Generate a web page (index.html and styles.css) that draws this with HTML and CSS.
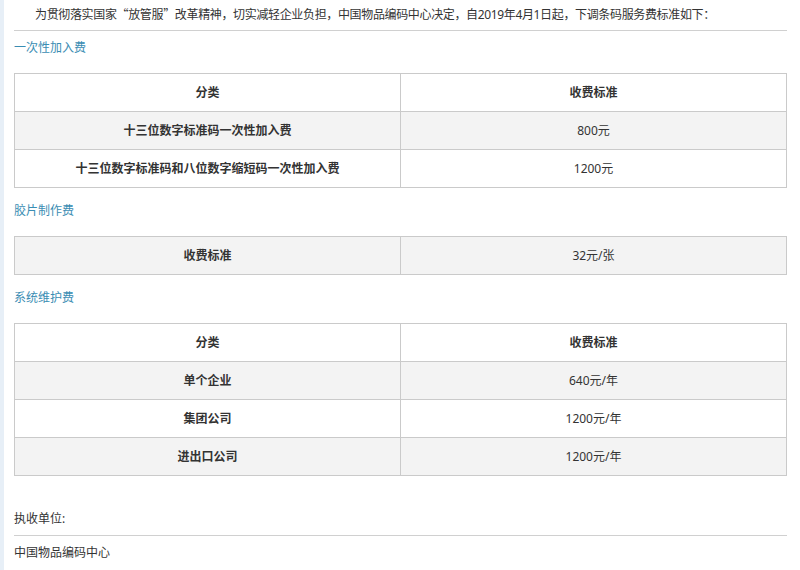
FILE: index.html
```html
<!DOCTYPE html>
<html lang="zh-CN">
<head>
<meta charset="utf-8">
<title>条码服务费标准</title>
<link rel="stylesheet" href="styles.css">
</head>
<body>
<div class="page">
  <p class="intro">为贯彻落实国家<span class="cjk">“</span>放管服<span class="cjk">”</span>改革精神，切实减轻企业负担，中国物品编码中心决定，自2019年4月1日起，下调条码服务费标准如下：</p>

  <h3 class="sec sec-first">一次性加入费</h3>
  <table class="fee">
    <tr class="row-white"><th>分类</th><th>收费标准</th></tr>
    <tr class="row-gray"><th>十三位数字标准码一次性加入费</th><td>800元</td></tr>
    <tr class="row-white"><th>十三位数字标准码和八位数字缩短码一次性加入费</th><td>1200元</td></tr>
  </table>

  <h3 class="sec">胶片制作费</h3>
  <table class="fee">
    <tr class="row-gray"><th>收费标准</th><td>32元/张</td></tr>
  </table>

  <h3 class="sec">系统维护费</h3>
  <table class="fee">
    <tr class="row-white"><th>分类</th><th>收费标准</th></tr>
    <tr class="row-gray"><th>单个企业</th><td>640元/年</td></tr>
    <tr class="row-white"><th>集团公司</th><td>1200元/年</td></tr>
    <tr class="row-gray"><th>进出口公司</th><td>1200元/年</td></tr>
  </table>

  <p class="unit-label">执收单位:</p>
  <p class="unit-name">中国物品编码中心</p>
</div>
</body>
</html>
```
FILE: styles.css
```css
html, body {
  margin: 0;
  padding: 0;
}
body {
  background: #e7eff7;
  font-family: "Noto Sans", "Noto Sans CJK SC", sans-serif;
  font-size: 12px;
  color: #333;
}
.page {
  margin-left: 4px;
  background: #fff;
  min-height: 570px;
  padding: 0 13px 0 10px;
  box-sizing: border-box;
}
.cjk {
  font-family: "Noto Sans CJK SC", sans-serif;
}
.intro {
  margin: 0;
  padding: 4px 0 5px 21px;
  line-height: 20px;
  letter-spacing: -0.35px;
  border-bottom: 1px solid #d0d0d0;
}
.sec {
  margin: 14px 0 16px;
  font-size: 12px;
  font-weight: normal;
  line-height: 18px;
  color: #3a8db3;
}
.sec-first {
  margin-top: 8px;
}
.fee {
  width: 100%;
  border-collapse: collapse;
  table-layout: fixed;
}
.fee th, .fee td {
  width: 50%;
  height: 38px;
  padding: 0 8px;
  border: 1px solid #cacaca;
  text-align: center;
  line-height: 18px;
  font-size: 12px;
  color: #333;
  box-sizing: border-box;
}
.fee th {
  font-weight: bold;
}
.fee td {
  font-weight: normal;
}
.row-gray {
  background: #f3f3f3;
}
.row-white {
  background: #fff;
}
.unit-label {
  margin: 34px 0 0;
  padding-bottom: 7px;
  line-height: 18px;
  border-bottom: 1px solid #d0d0d0;
}
.unit-name {
  margin: 8px 0 0;
  line-height: 18px;
}
```
